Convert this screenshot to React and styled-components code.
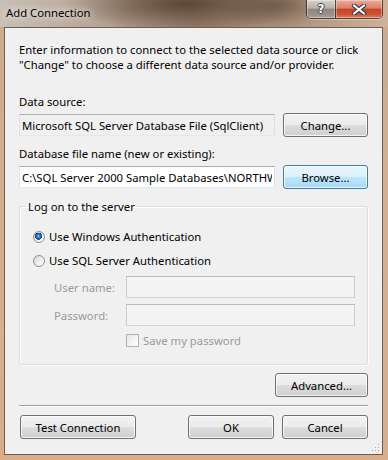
import React from "react";
import styled, { createGlobalStyle } from "styled-components";

const GlobalStyle = createGlobalStyle`
    html, body {
        margin: 0;
        padding: 0;
    }
    body {
        width: 388px;
        height: 460px;
        overflow: hidden;
        font-family: "Noto Sans", "Open Sans", sans-serif;
        font-size: 11.3px;
        color: #000;
    }
`;

const Frame = styled.div`
    width: 388px;
    height: 460px;
    display: flex;
    flex-direction: column;
    background: linear-gradient(to bottom, #c9a98e 0%, #d5af8f 35%, #dbae8b 100%);
`;

const TitleBar = styled.div`
    height: 27px;
    flex: none;
    display: flex;
    align-items: flex-start;
    padding: 0 5px 0 6px;
    background:
        radial-gradient(ellipse 120px 28px at 185px 4px, rgba(88, 68, 54, 0.95), rgba(88, 68, 54, 0)),
        radial-gradient(ellipse 60px 22px at 275px 6px, rgba(110, 88, 72, 0.8), rgba(110, 88, 72, 0)),
        linear-gradient(to right, #c8bfb6 0%, #b8a695 25%, #9a806b 50%, #ae947e 75%, #cdb199 100%);
`;

const Title = styled.div`
    margin-top: 5px;
    line-height: 15px;
    color: #000;
    text-shadow: 0 0 6px rgba(255, 255, 255, 0.95), 0 0 12px rgba(255, 255, 255, 0.7);
`;

const Caption = styled.div`
    margin-left: auto;
    display: flex;
    height: 18px;
    border: 1px solid rgba(40, 32, 28, 0.75);
    border-top: none;
    border-radius: 0 0 5px 5px;
    overflow: hidden;
    box-shadow: 0 1px 0 rgba(255, 255, 255, 0.35);
`;

const CaptionButton = styled.div`
    width: ${(p) => p.$width}px;
    height: 100%;
    display: flex;
    align-items: center;
    justify-content: center;
    box-shadow: inset 0 0 0 1px rgba(255, 255, 255, 0.35);
    background: ${(p) =>
        p.$close
            ? "linear-gradient(to bottom, #e9ab9c 0%, #dc7f69 45%, #c8432a 52%, #cf5235 80%, #e0825d 100%)"
            : "linear-gradient(to bottom, #d9d3cd 0%, #b8b0aa 45%, #8f8780 52%, #978f88 80%, #aaa29b 100%)"};
    & + & {
        border-left: 1px solid rgba(40, 32, 28, 0.75);
    }
`;

const HelpGlyph = styled.span`
    font-family: "DejaVu Sans", sans-serif;
    font-weight: bold;
    font-size: 12px;
    line-height: 12px;
    color: #fff;
    text-shadow: -1px 0 #3b3f4a, 1px 0 #3b3f4a, 0 -1px #3b3f4a, 0 1px #3b3f4a;
`;

const Client = styled.div`
    position: relative;
    flex: 1;
    margin: 0 5px 5px 4px;
    border: 1px solid #6a5f56;
    background: #f0f0f0;
    padding: 14px 14px 0;
    display: flex;
    flex-direction: column;
`;

const Intro = styled.p`
    margin: 0;
    line-height: 15px;
`;

const FieldLabel = styled.div`
    margin-top: ${(p) => p.$top}px;
    margin-bottom: 4px;
    line-height: 15px;
`;

const Row = styled.div`
    display: flex;
    align-items: center;
    gap: 8px;
    height: 24px;
`;

const TextBox = styled.input`
    box-sizing: border-box;
    height: 22px;
    min-width: 0;
    margin: 0;
    padding: 0 2px;
    font: inherit;
    color: #000;
    outline: none;
    flex: 1;
    border: 1px solid;
    border-color: #abadb3 #dbdfe6 #e3e9ef #e2e3ea;
    background: ${(p) => (p.$readOnly ? "#f0f0f0" : p.$disabled ? "#f4f4f4" : "#fff")};

    ${(p) => p.$disabled && "border-color: #b9bcbf #c9ccce #d3d5d7 #c9ccce;"}
`;

const Button = styled.button`
    box-sizing: border-box;
    width: ${(p) => p.$width}px;
    height: 24px;
    flex: none;
    margin: 0 0 0 ${(p) => p.$left || 0}px;
    padding: 0;
    font: inherit;
    color: #000;
    border-radius: 3px;
    border: 1px solid ${(p) => (p.$focused ? "#3c7fb1" : "#707070")};
    box-shadow: inset 0 0 0 1px rgba(255, 255, 255, 0.75);
    background: ${(p) =>
        p.$focused
            ? "linear-gradient(to bottom, #eaf6fd 0%, #d9f0fc 50%, #bee6fd 51%, #a7d9f5 100%)"
            : "linear-gradient(to bottom, #f2f2f2 0%, #ebebeb 50%, #dddddd 51%, #cfcfcf 100%)"};
`;

const Group = styled.fieldset`
    margin: 10px 0 0;
    padding: 0;
    min-width: 0;
    border: 1px solid #d5dfe5;
    border-radius: 3px;
    box-shadow: inset 1px 1px 0 #fff, 1px 1px 0 #fff;
`;

const Legend = styled.legend`
    margin-left: 6px;
    padding: 0 2px;
    line-height: 15px;
`;

const GroupBody = styled.div`
    padding: 15px 12px 16px 13px;
    display: flex;
    flex-direction: column;
`;

const RadioList = styled.div`
    display: flex;
    flex-direction: column;
    gap: 9px;
`;

const RadioRow = styled.label`
    display: flex;
    align-items: center;
    gap: 4px;
    height: 15px;
    line-height: 15px;
`;

const RadioDot = styled.span`
    box-sizing: border-box;
    width: 12px;
    height: 12px;
    flex: none;
    border-radius: 50%;
    border: 1px solid #8e8f8f;
    background: ${(p) =>
        p.$checked
            ? "radial-gradient(circle at 45% 42%, #a6dcfb 0, #3a8ad6 1.2px, #165fac 2.6px, #0b3e7a 3.4px, rgba(11,62,122,0) 3.6px), linear-gradient(135deg, #cfd1d3 0%, #f6f6f6 70%, #ffffff 100%)"
            : "linear-gradient(135deg, #d2d3d4 0%, #f3f3f3 65%, #ffffff 100%)"};
`;

const Credentials = styled.div`
    margin: 8px 0 0 21px;
    display: grid;
    grid-template-columns: 72px 1fr;
    row-gap: 6px;
    align-items: center;
`;

const DimLabel = styled.span`
    color: #9a9a9a;
    line-height: 15px;
`;

const CheckRow = styled.label`
    grid-column: 2;
    margin-top: 1px;
    display: flex;
    align-items: center;
    gap: 4px;
    height: 15px;
    line-height: 15px;
    color: #9a9a9a;
`;

const CheckBox = styled.span`
    box-sizing: border-box;
    width: 13px;
    height: 13px;
    flex: none;
    border: 1px solid #b1b1b1;
    background: linear-gradient(135deg, #e4e4e4 0%, #f6f6f6 60%, #fdfdfd 100%);
`;

const RightRow = styled.div`
    margin-top: 8px;
    display: flex;
    justify-content: flex-end;
`;

const Separator = styled.div`
    margin-top: 8px;
    height: 0;
    border-top: 1px solid #a0a0a0;
    border-bottom: 1px solid #fff;
`;

const Footer = styled.div`
    margin-top: 8px;
    display: flex;
    gap: 8px;
`;

const Spacer = styled.div`
    flex: 1;
`;

const Grip = styled.svg`
    position: absolute;
    right: 1px;
    bottom: 1px;
`;

const CloseGlyph = () => (
    <svg width="16" height="11" viewBox="0 0 16 11">
        <path d="M3 1.5 L13 9.5 M13 1.5 L3 9.5" stroke="#3b3f4a" strokeWidth="4.4" strokeLinecap="round" />
        <path d="M3 1.5 L13 9.5 M13 1.5 L3 9.5" stroke="#fff" strokeWidth="2.2" strokeLinecap="round" />
    </svg>
);

const App = () => (
    <>
        <GlobalStyle />
        <Frame>
            <TitleBar>
                <Title>Add Connection</Title>
                <Caption>
                    <CaptionButton $width={28}>
                        <HelpGlyph>?</HelpGlyph>
                    </CaptionButton>
                    <CaptionButton $width={46} $close>
                        <CloseGlyph />
                    </CaptionButton>
                </Caption>
            </TitleBar>

            <Client>
                <Intro>
                    Enter information to connect to the selected data source or click
                    "Change" to choose a different data source and/or provider.
                </Intro>

                <FieldLabel $top={22}>Data source:</FieldLabel>
                <Row>
                    <TextBox $readOnly readOnly value="Microsoft SQL Server Database File (SqlClient)" />
                    <Button $width={85}>Change...</Button>
                </Row>

                <FieldLabel $top={9}>Database file name (new or existing):</FieldLabel>
                <Row>
                    <TextBox readOnly value="C:\SQL Server 2000 Sample Databases\NORTHWND.MDF" />
                    <Button $width={85} $focused>Browse...</Button>
                </Row>

                <Group>
                    <Legend>Log on to the server</Legend>
                    <GroupBody>
                        <RadioList>
                            <RadioRow>
                                <RadioDot $checked />
                                Use Windows Authentication
                            </RadioRow>
                            <RadioRow>
                                <RadioDot />
                                Use SQL Server Authentication
                            </RadioRow>
                        </RadioList>
                        <Credentials>
                            <DimLabel>User name:</DimLabel>
                            <TextBox $disabled disabled value="" />
                            <DimLabel>Password:</DimLabel>
                            <TextBox $disabled disabled value="" type="password" />
                            <CheckRow>
                                <CheckBox />
                                Save my password
                            </CheckRow>
                        </Credentials>
                    </GroupBody>
                </Group>

                <RightRow>
                    <Button $width={93}>Advanced...</Button>
                </RightRow>

                <Separator />

                <Footer>
                    <Button $width={116} $left={1}>Test Connection</Button>
                    <Spacer />
                    <Button $width={86}>OK</Button>
                    <Button $width={86}>Cancel</Button>
                </Footer>

                <Grip width="10" height="10" viewBox="0 0 10 10">
                    {[
                        [8, 2], [5, 5], [8, 5], [2, 8], [5, 8], [8, 8],
                    ].map(([x, y], i) => (
                        <g key={i}>
                            <rect x={x} y={y} width="1" height="1" fill="#fff" />
                            <rect x={x - 1} y={y - 1} width="1" height="1" fill="#a8a8a8" />
                        </g>
                    ))}
                </Grip>
            </Client>
        </Frame>
    </>
);

export default App;
